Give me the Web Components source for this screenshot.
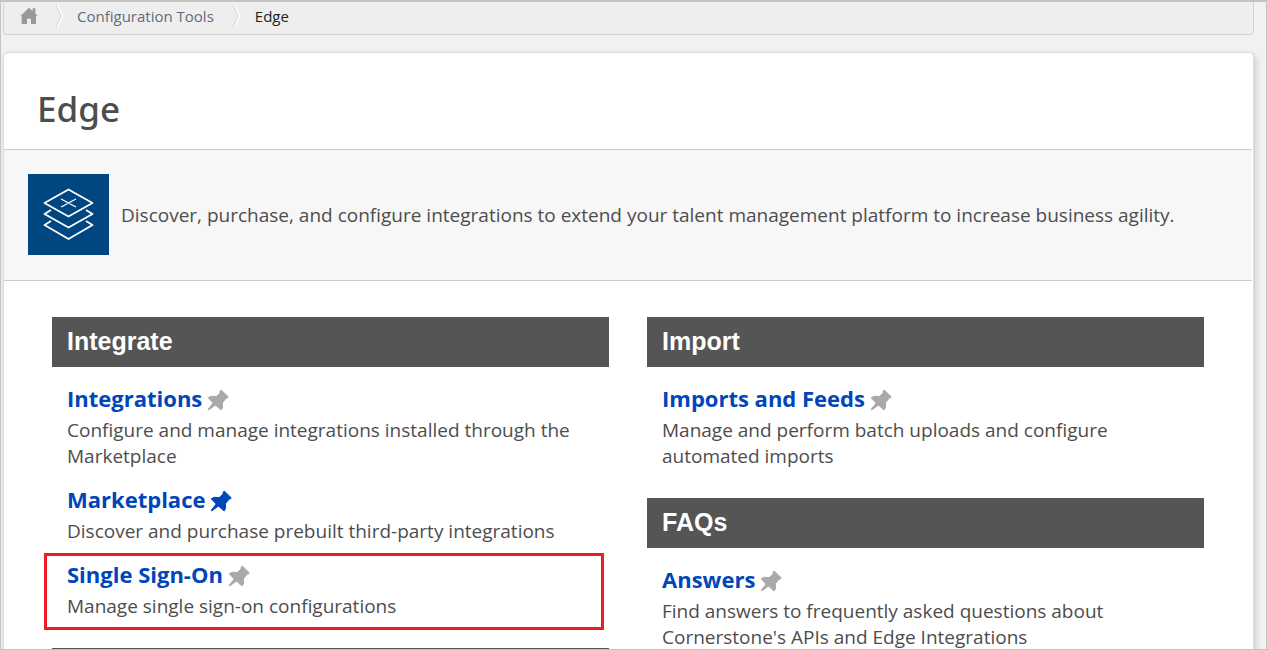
<!DOCTYPE html>
<html lang="en">
<head>
<meta charset="utf-8">
<title>Edge</title>
<style>
  body { margin: 0; background: #f1f1f1; font-family: "Open Sans", "Noto Sans", sans-serif; color: #4d4d4d; }
</style>
</head>
<body>
<edge-page>
  <bread-crumbs slot="crumbs" parent="Configuration Tools" current="Edge"></bread-crumbs>
  <page-card heading="Edge">
    <span slot="intro">Discover, purchase, and configure integrations to extend your talent management platform to increase business agility.</span>
    <link-column>
      <link-section heading="Integrate">
        <link-item label="Integrations">Configure and manage integrations installed through the Marketplace</link-item>
        <link-item label="Marketplace" pinned>Discover and purchase prebuilt third-party integrations</link-item>
        <link-item label="Single Sign-On" marked>Manage single sign-on configurations</link-item>
      </link-section>
      <link-section></link-section>
    </link-column>
    <link-column>
      <link-section heading="Import">
        <link-item label="Imports and Feeds">Manage and perform batch uploads and configure automated imports</link-item>
      </link-section>
      <link-section heading="FAQs">
        <link-item label="Answers">Find answers to frequently asked questions about Cornerstone's APIs and Edge Integrations</link-item>
      </link-section>
    </link-column>
  </page-card>
</edge-page>
<script>
  class BaseElement extends HTMLElement {
    constructor() {
      super();
      this.attachShadow({ mode: 'open' });
    }
    connectedCallback() {
      this.shadowRoot.innerHTML = this.view();
    }
  }

  customElements.define('edge-page', class extends BaseElement {
    view() {
      return `<style>
        :host { display: block; box-sizing: border-box; height: 100vh; overflow: hidden;
          border: 1px solid #c3c3c3; border-top-width: 2px; padding: 0 12px 0 2px; }
      </style><slot name="crumbs"></slot><main><slot></slot></main>`;
    }
  });

  customElements.define('bread-crumbs', class extends BaseElement {
    view() {
      const chevron = '<svg width="9" height="24" viewBox="0 0 9 24" fill="none" aria-hidden="true"><path d="M2 1l5 11-5 11" stroke="#fff" stroke-width="2"/><path d="M1 1l5 11-5 11" stroke="#d3d3d3"/></svg>';
      return `<style>
        :host { display: block; box-sizing: border-box; height: 33px; background: #eee;
          border: 1px solid #d3d3d3; border-top: 0; border-radius: 0 0 4px 4px; }
        nav { display: flex; align-items: center; height: 28px; padding-left: 16px; font-size: 15px; }
        a { display: flex; color: #5f6b7e; text-decoration: none; }
        svg { display: block; }
        .home { margin-right: 17px; }
        .parent { margin: 0 18px 0 13px; }
        .current { margin-left: 14px; color: #222; }
      </style>
      <nav aria-label="Breadcrumb">
        <a class="home" href="#home" aria-label="Home"><svg width="18" height="18" viewBox="0 0 18 18" fill="#999"><path d="M9 0.8L12.6 4V1.2h2.8v5.2L17.6 9H16v8h-5v-5.2H7V17H1.600V9H0.400z"/></svg></a>
        ${chevron}<a class="parent" href="#tools">${this.getAttribute('parent')}</a>
        ${chevron}<span class="current" aria-current="page">${this.getAttribute('current')}</span>
      </nav>`;
    }
  });

  customElements.define('page-card', class extends BaseElement {
    view() {
      return `<style>
        :host { display: block; margin-top: 17px; background: #fff; border: 1px solid #dcdcdc;
          border-radius: 5px; box-shadow: 2px 3px 6px rgba(0,0,0,.15); }
        h1 { margin: 0; padding: 32px 33px 16px; font-family: "Noto Sans", sans-serif; font-size: 35px; line-height: 48px; font-weight: 500; color: #4d4d4d; }
        .intro { display: flex; align-items: center; gap: 12px; padding: 24px 24px 25px; min-height: 81px;
          margin-right: 1px; background: #f7f7f7; border: solid #ccc; border-width: 1px 0;
          font-size: 19px; line-height: 26px; }
        .intro svg { flex: none; background: #004680; }
        .columns { display: grid; grid-template-columns: 1fr 1fr; gap: 38px; padding: 36px 49px 36px 48px; }
      </style>
      <h1>${this.getAttribute('heading')}</h1>
      <div class="intro">
        <svg width="81" height="81" viewBox="0 0 81 81" fill="none" stroke="#fff" stroke-width="1.8" stroke-linejoin="round" aria-hidden="true">
          <path d="M40.500 15.500L64.500 29 40.500 42.500 16.500 29z"/>
          <path d="M23 36l-6.500 4 24 13.500 24-13.500-6.500-4M23 47l-6.500 4 24 14 24-14-6.500-4"/>
          <path stroke-width="1.200" d="M33 25q4 2 7.500 4t7.500 4M48 25q-4 2-7.500 4t-7.500 4"/>
        </svg>
        <slot name="intro"></slot>
      </div>
      <div class="columns"><slot></slot></div>`;
    }
  });

  customElements.define('link-column', class extends BaseElement {
    view() {
      return `<style>
        :host { display: flex; flex-direction: column; gap: 29px; min-width: 0; }
      </style><slot></slot>`;
    }
  });

  customElements.define('link-section', class extends BaseElement {
    view() {
      return `<style>
        :host { display: block; }
        h2 { margin: 0; height: 50px; box-sizing: border-box; padding: 0 15px; background: #555; color: #fff;
          font: bold 25px/48px "Liberation Sans", Arial, sans-serif; }
        .items { display: flex; flex-direction: column; gap: 13px; padding: 14px 0 0 15px; }
      </style>
      <h2>${this.getAttribute('heading') || ''}</h2>
      <div class="items"><slot></slot></div>`;
    }
  });

  customElements.define('link-item', class extends BaseElement {
    view() {
      const pinned = this.hasAttribute('pinned');
      return `<style>
        :host { display: block; position: relative; }
        :host([marked])::after { content: ""; position: absolute; inset: -4px 5px -11px -23px;
          border: 3px solid #ed1c24; pointer-events: none; }
        .title { display: flex; align-items: flex-start; gap: 5px; height: 36px; }
        a { color: #0046b8; font-weight: 700; font-size: 22px; line-height: 34px; text-decoration: none; }
        button { margin: 8px 0 0; padding: 0; border: 0; background: none; color: #a9a9ad; }
        button[aria-pressed="true"] { color: #0046b8; }
        svg { display: block; }
        p { margin: 0; font-size: 19px; line-height: 26px; }
      </style>
      <div class="title">
        <a href="#${this.getAttribute('label').toLowerCase().replace(/ /g, '-')}">${this.getAttribute('label')}</a>
        <button type="button" aria-pressed="${pinned}" aria-label="Pin ${this.getAttribute('label')}">
          <svg width="22" height="22" viewBox="0 0 22 22" fill="currentColor" stroke="currentColor" stroke-linejoin="round"><path d="M14.200 1L21.200 7.800 20.600 8.800 19 9.200 15.400 13.800 15.600 18 14.200 21 9.200 16.800 8.200 16.200 1.800 20.900 1.200 20.300 6.200 14 1.200 8.800 4.200 7.300 9.200 7.600 13 4.200 13.200 2.200z"/></svg>
        </button>
      </div>
      <p><slot></slot></p>`;
    }
  });
</script>
</body>
</html>
